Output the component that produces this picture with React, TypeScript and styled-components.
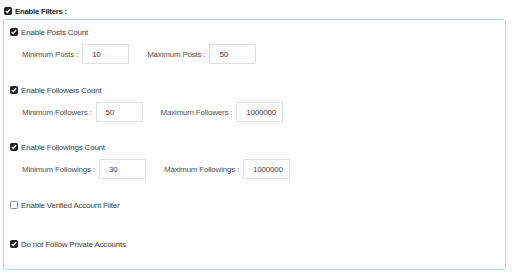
import React from "react";
import styled, { createGlobalStyle } from "styled-components";

const Global = createGlobalStyle`
  html, body { margin: 0; padding: 0; background: #ffffff; }
  body { font-family: Arial, "Liberation Sans", sans-serif; font-size: 8px; letter-spacing: -0.2px; color: #444; }
`;

const Page = styled.div`
  padding: 4px 7px 0 3px;
  width: 503px;
`;

const CheckLine = styled.label<{ $bold?: boolean; $indent?: number }>`
  display: flex;
  align-items: center;
  height: 14px;
  gap: 3px;
  padding-left: ${(p) => p.$indent ?? 0}px;
  font-weight: ${(p) => (p.$bold ? 700 : 400)};
  font-size: ${(p) => (p.$bold ? "7.7px" : "8px")};
  color: ${(p) => (p.$bold ? "#222" : "#444")};
  white-space: nowrap;
`;

const Box = styled.span<{ $on: boolean }>`
  box-sizing: border-box;
  width: 8px;
  height: 8px;
  border-radius: 1.5px;
  border: 1px solid ${(p) => (p.$on ? "#222" : "#8a8a8a")};
  background: ${(p) => (p.$on ? "#222" : "#fff")};
  display: inline-flex;
  align-items: center;
  justify-content: center;
  flex: none;
  svg { display: block; }
`;

const Panel = styled.div`
  margin-top: 1px;
  border: 1px solid #b5dbe2;
  border-radius: 3px;
  padding: 5px 6px 19px 6px;
  box-sizing: border-box;
  height: 251px;
`;

const Section = styled.div<{ $mt: number }>`
  margin-top: ${(p) => p.$mt}px;
`;

const Row = styled.div`
  display: flex;
  align-items: center;
  margin-top: 5px;
  padding-left: 12px;
  height: 20px;
`;

const Field = styled.div`
  display: flex;
  align-items: center;
  gap: 4px;
  margin-right: 18px;
`;

const Label = styled.span`
  color: #555;
  white-space: nowrap;
`;

const Input = styled.div`
  box-sizing: border-box;
  width: 47px;
  height: 20px;
  border: 1px solid #e0e0e0;
  padding-left: 9px;
  display: flex;
  align-items: center;
  color: #444;
`;

const Check = ({ on }: { on: boolean }) => (
  <Box $on={on}>
    {on && (
      <svg width="6" height="6" viewBox="0 0 6 6">
        <path d="M0.8 3.1 L2.3 4.5 L5.2 1.1" stroke="#fff" strokeWidth="1.3" fill="none" />
      </svg>
    )}
  </Box>
);

type F = { min: string; minV: string; max: string; maxV: string };

const FieldRow = ({ min, minV, max, maxV }: F) => (
  <Row>
    <Field>
      <Label>{min}</Label>
      <Input>{minV}</Input>
    </Field>
    <Field>
      <Label>{max}</Label>
      <Input>{maxV}</Input>
    </Field>
  </Row>
);

export default function App() {
  return (
    <>
      <Global />
      <Page>
        <CheckLine $bold $indent={1}>
          <Check on /> Enable Filters :
        </CheckLine>
        <Panel>
          <Section $mt={0}>
            <CheckLine>
              <Check on /> Enable Posts Count
            </CheckLine>
            <FieldRow min="Minimum Posts :" minV="10" max="Maximum Posts :" maxV="50" />
          </Section>
          <Section $mt={19}>
            <CheckLine>
              <Check on /> Enable Followers Count
            </CheckLine>
            <FieldRow min="Minimum Followers :" minV="50" max="Maximum Followers :" maxV="1000000" />
          </Section>
          <Section $mt={18}>
            <CheckLine>
              <Check on /> Enable Followings Count
            </CheckLine>
            <FieldRow min="Minimum Followings :" minV="30" max="Maximum Followings :" maxV="1000000" />
          </Section>
          <Section $mt={19}>
            <CheckLine>
              <Check on={false} /> Enable Verified Account Filter
            </CheckLine>
          </Section>
          <Section $mt={25}>
            <CheckLine>
              <Check on /> Do not Follow Private Accounts
            </CheckLine>
          </Section>
        </Panel>
      </Page>
    </>
  );
}
